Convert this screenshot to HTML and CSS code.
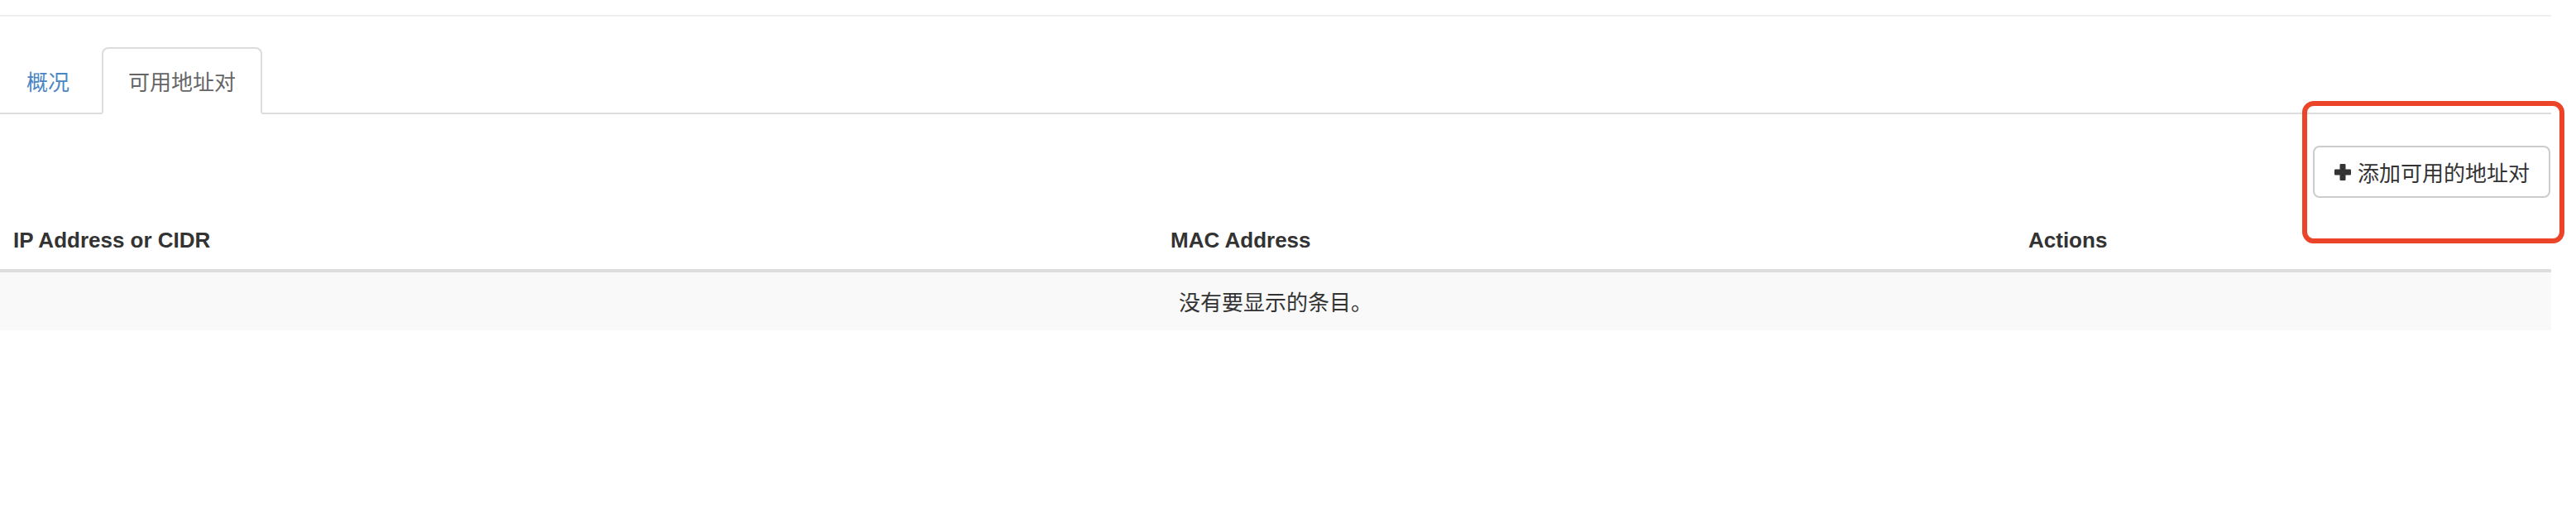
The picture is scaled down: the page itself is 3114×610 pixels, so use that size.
FILE: index.html
```html
<!DOCTYPE html>
<html lang="zh-CN">
<head>
    <meta charset="UTF-8">
    <title>可用地址对</title>
    <link rel="stylesheet" href="styles.css">
</head>
<body>
    <div class="page">
        <div class="page-header"></div>

        <ul class="nav-tabs">
            <li><a href="#overview">概况</a></li>
            <li class="active"><a href="#pairs">可用地址对</a></li>
        </ul>

        <div class="table-actions">
            <button type="button" class="btn">
                <svg class="icon-plus" width="20" height="20" viewBox="0 0 20 20">
                    <rect x="6.5" y="0" width="7" height="20" rx="1"/>
                    <rect x="0" y="6.5" width="20" height="7" rx="1"/>
                </svg>
                添加可用的地址对
            </button>
        </div>

        <table class="table">
            <thead>
                <tr>
                    <th class="col-ip">IP Address or CIDR</th>
                    <th class="col-mac">MAC Address</th>
                    <th class="col-actions">Actions</th>
                </tr>
            </thead>
            <tbody>
                <tr class="empty">
                    <td colspan="3">没有要显示的条目。</td>
                </tr>
            </tbody>
        </table>

        <!-- highlight box drawn over the add button -->
        <div class="highlight"></div>
    </div>
</body>
</html>
```

FILE: styles.css
```css
* {
    margin: 0;
    padding: 0;
    box-sizing: border-box;
}

body {
    font-family: "Liberation Sans", "Noto Sans CJK SC", sans-serif;
    font-size: 26px;
    line-height: 37px;
    color: #333;
    background-color: #fff;
}

.page {
    position: relative;
    padding-right: 30px;
}

.page-header {
    height: 20px;
    border-bottom: 2px solid #eee;
}

/* tabs */
.nav-tabs {
    list-style: none;
    display: flex;
    margin-top: 37px;
    border-bottom: 2px solid #ddd;
}

.nav-tabs li {
    margin-right: 7px;
    margin-bottom: -2px;
}

.nav-tabs a {
    display: block;
    padding: 20px 30px;
    border: 2px solid transparent;
    border-radius: 8px 8px 0 0;
    color: #4a86c4;
    text-decoration: none;
    font-family: "Noto Sans CJK SC", sans-serif;
}

.nav-tabs .active a {
    color: #666;
    background-color: #fff;
    border-color: #ddd;
    border-bottom-color: transparent;
}

/* add button */
.table-actions {
    display: flex;
    justify-content: flex-end;
    margin-top: 38px;
    margin-bottom: 17px;
    padding-right: 1px;
}

.btn {
    display: flex;
    align-items: center;
    gap: 8px;
    padding: 11px 23px 11px 24px;
    font-family: "Noto Sans CJK SC", sans-serif;
    font-size: 26px;
    line-height: 37px;
    color: #333;
    background-color: #fff;
    border: 2px solid #ccc;
    border-radius: 8px;
    cursor: pointer;
}

.icon-plus {
    fill: #333;
    margin-top: 1px;
}

/* table */
.table {
    width: 100%;
    border-collapse: collapse;
    table-layout: fixed;
}

.table th {
    text-align: left;
    font-weight: bold;
    padding: 16px 16px;
    border-bottom: 4px solid #ddd;
    color: #333;
}

.col-ip {
    width: 1399px;
}

.col-mac {
    width: 1037px;
}

.empty td {
    background-color: #f9f9f9;
    text-align: center;
    padding: 16px;
    line-height: 38px;
    font-family: "Noto Sans CJK SC", sans-serif;
}

.highlight {
    position: absolute;
    left: 2783px;
    top: 122px;
    width: 317px;
    height: 172px;
    border: 6px solid #ec4429;
    border-radius: 14px;
    pointer-events: none;
}
```
